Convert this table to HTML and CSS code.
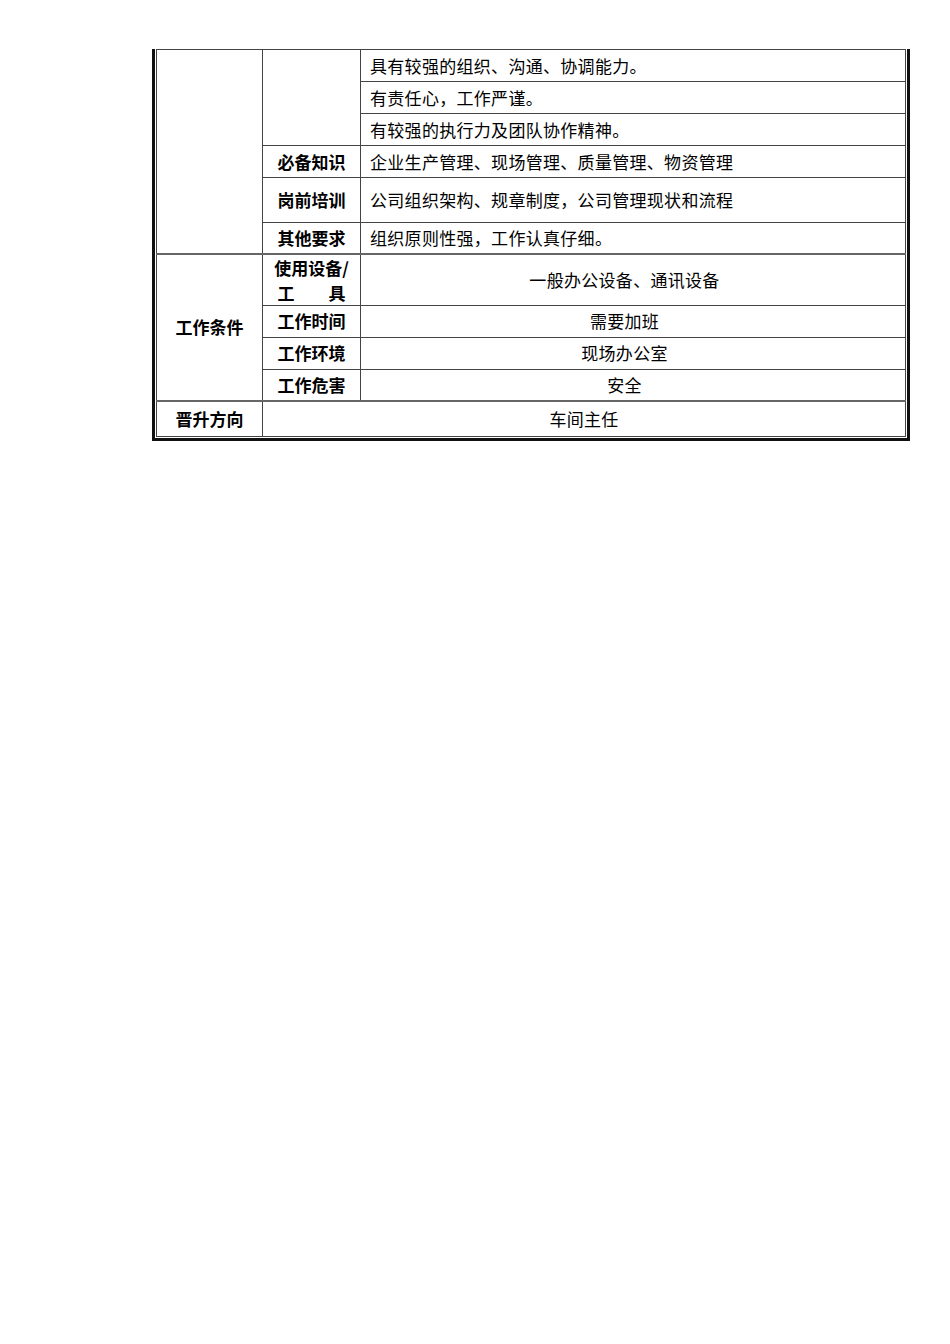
FILE: index.html
```html
<!DOCTYPE html>
<html lang="zh-CN">
<head>
<meta charset="utf-8">
<title>岗位说明</title>
<link rel="stylesheet" href="styles.css">
</head>
<body>
<div class="frame">
  <table class="sheet">
    <colgroup>
      <col class="c1">
      <col class="c2">
      <col class="c3">
    </colgroup>
    <tbody>
      <tr class="h32">
        <td rowspan="6"></td>
        <td rowspan="3"></td>
        <td class="txt">具有较强的组织、沟通、协调能力。</td>
      </tr>
      <tr class="h32">
        <td class="txt">有责任心，工作严谨。</td>
      </tr>
      <tr class="h32">
        <td class="txt">有较强的执行力及团队协作精神。</td>
      </tr>
      <tr class="h32">
        <td class="lbl">必备知识</td>
        <td class="txt">企业生产管理、现场管理、质量管理、物资管理</td>
      </tr>
      <tr class="h45">
        <td class="lbl">岗前培训</td>
        <td class="txt">公司组织架构、规章制度，公司管理现状和流程</td>
      </tr>
      <tr class="h31">
        <td class="lbl">其他要求</td>
        <td class="txt">组织原则性强，工作认真仔细。</td>
      </tr>
      <tr class="h51 section">
        <td rowspan="4" class="lbl">工作条件</td>
        <td class="lbl two">
          <div class="l1">使用设备/</div>
          <div class="l2">工具</div>
        </td>
        <td class="mid">一般办公设备、通讯设备</td>
      </tr>
      <tr class="h32">
        <td class="lbl">工作时间</td>
        <td class="mid">需要加班</td>
      </tr>
      <tr class="h32">
        <td class="lbl">工作环境</td>
        <td class="mid">现场办公室</td>
      </tr>
      <tr class="h32">
        <td class="lbl">工作危害</td>
        <td class="mid">安全</td>
      </tr>
      <tr class="h35 section">
        <td class="lbl">晋升方向</td>
        <td colspan="2" class="ctr">车间主任</td>
      </tr>
    </tbody>
  </table>
</div>
</body>
</html>
```

FILE: styles.css
```css
html, body {
  margin: 0;
  padding: 0;
  background: #ffffff;
}

body {
  font-family: "Noto Sans CJK SC", "Noto Sans", sans-serif;
  color: #000;
}

.frame {
  margin: 49px 0 0 152px;
  width: 750px;
  border-left: 3px solid #111;
  border-right: 3px solid #111;
  border-bottom: 3px solid #111;
  padding: 0 1px 1px 1px;
}

.sheet {
  width: 750px;
  border-collapse: collapse;
  table-layout: fixed;
  border: 1px solid #444;
}

.c1 { width: 106px; }
.c2 { width: 98px; }
.c3 { width: auto; }

.sheet td {
  border: 1px solid #444;
  padding: 0;
  font-size: 17px;
  line-height: 22px;
  vertical-align: middle;
}

.h31 { height: 31px; }
.h32 { height: 32px; }
.h35 { height: 35px; }
.h45 { height: 45px; }
.h51 { height: 51px; }

.section td {
  border-top: 2px solid #666;
}

.txt {
  padding-left: 9px !important;
  text-align: left;
  letter-spacing: 0.3px;
}

.lbl {
  font-weight: 700;
  text-align: center;
}

.two {
  line-height: 25px !important;
}

.two .l2 {
  width: 68px;
  margin: 0 auto;
  text-align: justify;
  text-align-last: justify;
}

.mid {
  text-align: center;
  padding-right: 17px !important;
  letter-spacing: 0.3px;
}

.ctr {
  text-align: center;
  letter-spacing: 0.3px;
}
```
